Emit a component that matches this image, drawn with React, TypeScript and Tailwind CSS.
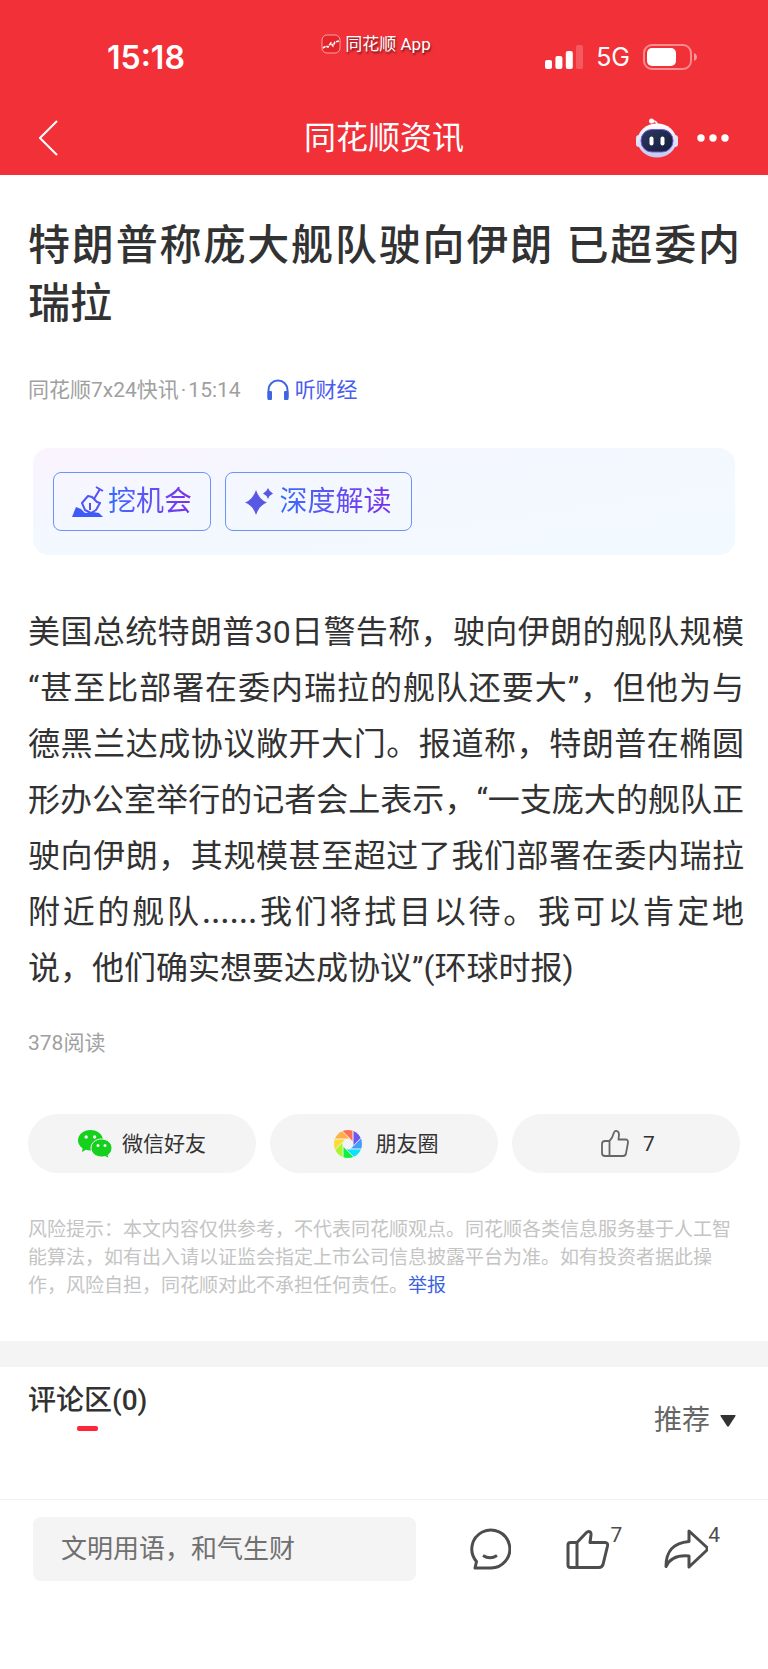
import React from 'react';

const StatusBar = () => (
  <div className="grid h-[101px] grid-cols-[1fr_auto_1fr] items-start">
    <div className="mt-[42px] pl-[107px] font-['Inter'] text-[32px] leading-8 font-semibold">15:18</div>
    <div className="mt-[34px] mr-4 flex items-center gap-1">
      <svg className="h-5 w-5" viewBox="0 0 20 20" fill="none">
        <rect x="1" y="1" width="18" height="18" rx="5" fill="#e4252c" stroke="#fff" strokeOpacity="0.55" />
        <path d="M2 14l3-2 2 1 3-4 2 3 2-4 4-1" stroke="#fff" strokeWidth="1.6" strokeDasharray="3 1" />
      </svg>
      <span className="text-[17px] leading-5 [text-shadow:1px_2px_2px_rgba(0,0,0,0.5)]">同花顺 App</span>
    </div>
    <div className="mt-[41px] flex h-8 items-center justify-end pr-[71px]">
      <svg className="h-6 w-[38px]" viewBox="0 0 38 24" fill="#fff">
        <rect x="0" y="15" width="7" height="9" rx="2" />
        <rect x="10.4" y="11" width="7" height="13" rx="2" />
        <rect x="20.8" y="6" width="7" height="18" rx="2" />
        <rect x="31" y="0" width="7" height="24" rx="2" opacity="0.2" />
      </svg>
      <span className="mx-[13px] font-['Inter'] text-[25px] leading-8">5G</span>
      <svg className="h-[26px] w-[54px]" viewBox="0 0 54 26" fill="none">
        <rect x="1" y="1" width="47" height="24" rx="8" stroke="#fff" strokeOpacity="0.45" strokeWidth="2" />
        <rect x="4" y="4" width="29" height="18" rx="5" fill="#fff" />
        <path d="M51 9c2 1 3 2.500 3 4s-1 3-3 4z" fill="#fff" fillOpacity="0.5" />
      </svg>
    </div>
  </div>
);

const RobotIcon = () => (
  <svg className="h-10 w-[42px]" viewBox="0 0 42 40">
    <defs>
      <linearGradient id="shell" x1="0" y1="0" x2="0" y2="1">
        <stop offset="0" stopColor="#ffffff" />
        <stop offset="1" stopColor="#c3c8ef" />
      </linearGradient>
      <linearGradient id="visor" x1="0" y1="0" x2="1" y2="1">
        <stop offset="0" stopColor="#2b3a5e" />
        <stop offset="1" stopColor="#141c3c" />
      </linearGradient>
    </defs>
    <path d="M16 3.500c3-1 5 .5 5.500 4" fill="none" stroke="#e8eaff" strokeWidth="1.800" />
    <circle cx="15.500" cy="3" r="2.500" fill="#fff" />
    <rect x="0" y="17" width="6" height="12" rx="3" fill="#dfe2fa" />
    <rect x="36" y="17" width="6" height="12" rx="3" fill="#dfe2fa" />
    <ellipse cx="21" cy="22.500" rx="19.500" ry="17" fill="url(#shell)" />
    <rect x="5" y="11.500" width="32" height="22.500" rx="11" fill="url(#visor)" stroke="#7657d8" />
    <rect x="13.500" y="18.500" width="4" height="9" rx="2" fill="#fff" />
    <rect x="24.500" y="18.500" width="4" height="9" rx="2" fill="#fff" />
  </svg>
);

const WechatIcon = () => (
  <svg className="h-7 w-[34px]" viewBox="0 0 34 28">
    <path d="M12.500 0C5.500 0 0 4.600 0 10.300c0 3.300 1.800 6.100 4.600 8L4 22l4-2.300c1.500.5 3 .7 4.500.7C19.400 20.400 25 16 25 10.300S19.400 0 12.500 0z" fill="#15d01d" />
    <path d="M23.500 9C17.500 9 13 13 13 18s4.500 9 10.500 9c1.300 0 2.500-.2 3.600-.5L31 28.500l-.8-3.500c2.400-1.700 3.800-4.100 3.800-7 0-5-4.500-9-10.500-9z" fill="#15d01d" stroke="#f4f4f4" />
    <g fill="#f4f4f4">
      <circle cx="8.200" cy="7" r="1.700" />
      <circle cx="16.600" cy="7" r="1.700" />
      <circle cx="20" cy="15.500" r="1.500" />
      <circle cx="27" cy="15.500" r="1.500" />
    </g>
  </svg>
);

const bladeColors = ['#ff6f52', '#6f56f5', '#459df7', '#06e2ff', '#0df23e', '#aaf52f', '#fbdc35', '#ffb046'];

const MomentsIcon = () => (
  <svg className="h-7 w-7" viewBox="0 0 28 28">
    <defs>
      <clipPath id="lens">
        <circle cx="14" cy="14" r="14" />
      </clipPath>
    </defs>
    <g clipPath="url(#lens)">
      {bladeColors.map((color, index) => (
        <path
          key={color}
          d="M16.100 8.900L4-3.200L19.100-5V11.900z"
          fill={color}
          stroke="#f4f4f4"
          strokeWidth="0.700"
          transform={`rotate(${index * 45} 14 14)`}
        />
      ))}
    </g>
  </svg>
);

const ThumbIcon = () => (
  <svg className="mt-1 h-10 w-11" viewBox="0 0 44 40" fill="none" stroke="currentColor" strokeWidth="3" strokeLinejoin="round">
    <path d="M11 13.500H4.500q-2.500 0-2.500 2.500v20q0 2.500 2.500 2.500h28.500q3 0 4-3l4.500-18.500q.7-3.500-2.500-3.500H24l1-7.500c.3-3.500-2.500-4.500-4.500-2.500L11 13.500v25" />
  </svg>
);

const PillThumbIcon = () => (
  <svg className="h-[27px] w-7 text-[#666]" viewBox="0 0 28 27" fill="none" stroke="currentColor" strokeWidth="1.800" strokeLinejoin="round">
    <path d="M8.500 11H4q-3 0-3 3v9q0 3 3 3h18q2.500 0 3-2.500l2-11q.2-3-2.500-3h-7l.5-5C18 .5 14 0 13 2.500Q11.500 8 8.500 11v15" />
  </svg>
);

const ShovelIcon = () => (
  <svg className="h-8 w-8" viewBox="0 0 32 32" fill="none">
    <path d="M0 31l4-10 5 2 4 4 8-1 6 1 4 4z" fill="#3d5bfa" />
    <path d="M13 24l-3-7 6-7 4 1 5 5 3 1-4 7-5 3z" stroke="#4d57f4" strokeWidth="2" strokeLinejoin="round" />
    <path d="M22 13l6-10M24 1l7 4M18 24v-7" stroke="#584ff5" strokeWidth="2" />
  </svg>
);

const SparkIcon = () => (
  <svg className="h-7 w-7" viewBox="0 0 28 28" fill="#5758e4">
    <path d="M11 2q3 9.500 11 12.500-8 3-11 12.500Q8 17.500 0 14.500 8 11.500 11 2z" />
    <path d="M23 0q1.500 4 5 5.500-3.500 1.500-5 5.500-1.500-4-5-5.500 3.500-1.500 5-5.500z" />
  </svg>
);

const aiActions = [
  { label: '挖机会', icon: <ShovelIcon />, className: 'w-[158px] gap-1' },
  { label: '深度解读', icon: <SparkIcon />, className: 'w-[187px] gap-[6px]' }
];

const shareActions = [
  { label: '微信好友', icon: <WechatIcon />, className: 'gap-[10px]' },
  { label: '朋友圈', icon: <MomentsIcon />, className: 'gap-[14px] pl-1' },
  { label: '7', icon: <PillThumbIcon />, className: 'gap-[14px] pl-1' }
];

const App = () => {
  return (
    <div lang="zh-CN" className="min-h-screen bg-white font-['Roboto','Noto_Sans_CJK_SC',sans-serif] text-[#323232]">
      <header className="bg-[#f23038] text-white">
        <StatusBar />
        <nav className="grid h-[74px] grid-cols-[1fr_auto_1fr] items-center px-[39px]">
          <button aria-label="返回" className="w-5">
            <svg className="h-9 w-5" viewBox="0 0 20 36" fill="none" stroke="#fff" strokeWidth="2">
              <path d="M18 1L1 18l17 17" />
            </svg>
          </button>
          <h2 className="text-[32px] leading-10">同花顺资讯</h2>
          <div className="flex items-center justify-end gap-[19px]">
            <button aria-label="智能助手">
              <RobotIcon />
            </button>
            <button aria-label="更多">
              <svg className="h-2 w-8" viewBox="0 0 32 8" fill="#fff">
                <circle cx="4" cy="4" r="3.700" />
                <circle cx="16" cy="4" r="3.700" />
                <circle cx="28" cy="4" r="3.700" />
              </svg>
            </button>
          </div>
        </nav>
      </header>

      <main>
        <article className="px-7 pt-[42px] pb-10">
          <h1 className="text-justify text-[42px] leading-[58px] font-medium">特朗普称庞大舰队驶向伊朗 已超委内瑞拉</h1>

          <div className="mt-[43px] flex items-center text-[21px] leading-7 text-[#a0a0a0]">
            <span>同花顺7x24快讯</span>
            <span className="mx-[2px]">·</span>
            <span>15:14</span>
            <button className="ml-[26px] flex items-center gap-[6px] text-[#4a5cf0]">
              <svg className="h-[22px] w-[22px]" viewBox="0 0 22 22" fill="none">
                <path d="M1.500 19v-8a9.500 9.500 0 0119 0v8" stroke="#3f66e0" strokeWidth="2" />
                <rect x="0.500" y="12" width="4.500" height="9" rx="1" fill="#3f66e0" />
                <rect x="17" y="12" width="4.500" height="9" rx="1" fill="#3f66e0" />
              </svg>
              听财经
            </button>
          </div>

          <div className="mx-[5px] mt-11 flex gap-[14px] rounded-2xl bg-linear-to-br from-[#fbf3fe] via-[#f4f7ff] via-30% to-[#f2faff] px-5 py-6">
            {aiActions.map((action) => (
              <button
                key={action.label}
                className={`flex h-[59px] items-center justify-center rounded-lg border border-[#6c93f8] ${action.className}`}
              >
                {action.icon}
                <span className="bg-linear-to-r from-[#2f6bff] to-[#7a2be8] bg-clip-text text-[28px] leading-10 text-transparent">
                  {action.label}
                </span>
              </button>
            ))}
          </div>

          <p className="-mr-1 mt-[49px] text-justify text-[32px] leading-[56px]">
            美国总统特朗普30日警告称，驶向伊朗的舰队规模“甚至比部署在委内瑞拉的舰队还要大”，但他为与德黑兰达成协议敞开大门。报道称，特朗普在椭圆形办公室举行的记者会上表示，“一支庞大的舰队正驶向伊朗，其规模甚至超过了我们部署在委内瑞拉附近的舰队<span className="font-['Inter']">……</span>我们将拭目以待。我可以肯定地说，他们确实想要达成协议”(环球时报)
          </p>

          <div className="mt-[33px] text-[21px] leading-7 text-[#a0a0a0]">378阅读</div>

          <div className="mt-[57px] grid grid-cols-3 gap-[14px]">
            {shareActions.map((action) => (
              <button
                key={action.label}
                className={`flex h-[59px] items-center justify-center rounded-full bg-[#f4f4f4] text-[21px] leading-7 ${action.className}`}
              >
                {action.icon}
                {action.label}
              </button>
            ))}
          </div>

          <p className="mt-[43px] text-[19px] leading-7 text-[#c4c4c4]">
            <span>风险提示：本文内容仅供参考，不代表同花顺观点。同花顺各类信息服务基于人工智能算法，如有出入请以证监会指定上市公司信息披露平台为准。如有投资者据此操作，风险自担，同花顺对此不承担任何责任。</span>
            <a href="#report" className="text-[#3a62e0]">举报</a>
          </p>
        </article>

        <section className="mt-px flex h-[158px] items-start justify-between border-t-[26px] border-[#f4f4f4] px-7">
          <div className="flex flex-col items-center pt-[18px]">
            <h3 className="text-[28px] leading-8 font-medium">评论区(0)</h3>
            <div className="mt-[9px] h-[5px] w-[21px] rounded-xs bg-[#ff2436]" />
          </div>
          <button className="flex items-center gap-[10px] pt-[38px] pr-1 text-[28px] leading-8 text-[#666]">
            推荐
            <svg className="h-3 w-4" viewBox="0 0 16 12" fill="#323232">
              <path d="M1 0h14q1 0 .5 1L9 11q-1 1.500-2 0L.5 1Q0 0 1 0z" />
            </svg>
          </button>
        </section>
      </main>

      <footer className="flex items-start border-t border-[#f0f0f0] pt-[17px] pr-12 pl-[33px] text-[#4d4d4d]">
        <input
          type="text"
          aria-label="评论"
          placeholder="文明用语，和气生财"
          className="h-16 min-w-0 flex-1 rounded-lg bg-[#f4f4f4] px-7 text-[26px] placeholder:text-[#707070]"
        />
        <button aria-label="评论列表" className="mt-[11px] ml-[53px]">
          <svg className="h-[42px] w-[42px]" viewBox="0 0 42 42" fill="none" stroke="currentColor" strokeWidth="3" strokeLinejoin="round">
            <path d="M7.500 33.500A19 19 0 1 1 21 40H6z" />
            <path d="M14 27.500q7 4.500 14 0" />
          </svg>
        </button>
        <button aria-label="点赞" className="mt-2 ml-[55px] flex items-start">
          <ThumbIcon />
          <span className="text-[21px] leading-5">7</span>
        </button>
        <button aria-label="分享" className="mt-2 ml-[42px] flex items-start">
          <svg className="mt-1 h-10 w-11" viewBox="0 0 44 40" fill="none" stroke="currentColor" strokeWidth="3" strokeLinejoin="round">
            <path d="M25 2l17.500 16q1.500 2 0 3.500L25 38V27C14 26 6 29 2 37.500 2 22 9 14 25 12.500z" />
          </svg>
          <span className="text-[21px] leading-5">4</span>
        </button>
      </footer>
    </div>
  );
};

export default App;
